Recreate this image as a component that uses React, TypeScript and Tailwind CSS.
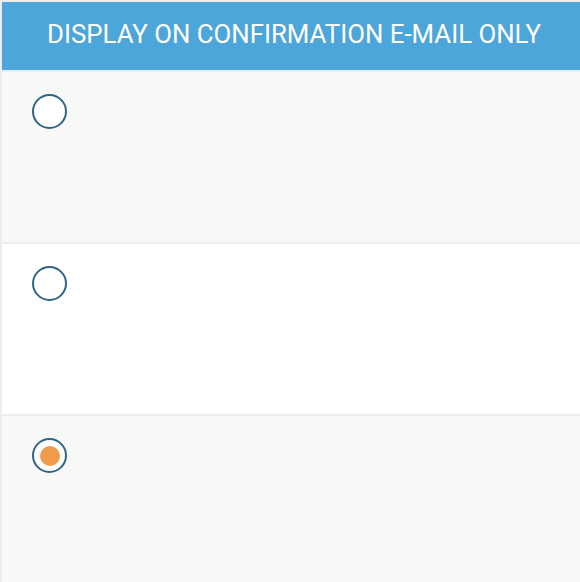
import React from "react";

function Radio({ checked }: { checked?: boolean }) {
  return (
    <div className="w-[35px] h-[35px] rounded-full border-2 border-[#2e6585] bg-white flex items-center justify-center">
      {checked && <div className="w-[20px] h-[20px] rounded-full bg-[#f09b4c]" />}
    </div>
  );
}

export default function App() {
  const rows = [false, false, true];
  return (
    <div
      className="w-[580px] h-[582px] overflow-hidden bg-[#ededed] pl-[2px] pt-[2px]"
      style={{ fontFamily: "Roboto, 'Liberation Sans', sans-serif" }}
    >
      <div className="h-[68px] bg-[#4ca6d9] flex items-center justify-center">
        <span className="text-white text-[25.8px] leading-none uppercase pl-[6px] pb-[2px]">
          Display on confirmation e-mail only
        </span>
      </div>
      <div className="flex flex-col gap-[2px] pt-[2px]">
        {rows.map((c, i) => (
          <div
            key={i}
            className={`h-[170px] pl-[30px] pt-[22px] ${i % 2 === 0 ? "bg-[#f8f8f8]" : "bg-white"}`}
          >
            <Radio checked={c} />
          </div>
        ))}
      </div>
    </div>
  );
}
